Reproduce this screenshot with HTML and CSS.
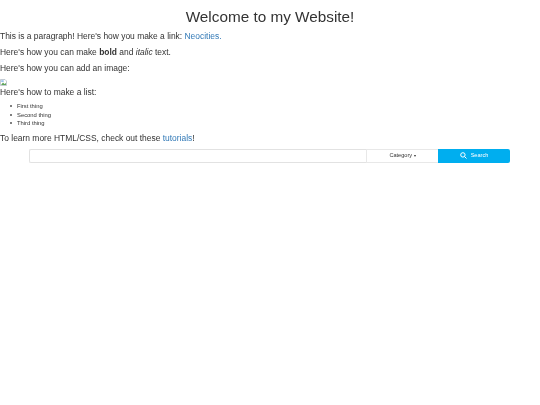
FILE: index.html
```html
<!DOCTYPE html>
<html lang="en">
<head>
    <meta charset="UTF-8">
    <title>My Website</title>
    <link rel="stylesheet" href="styles.css">
</head>
<body>
    <h1>Welcome to my Website!</h1>

    <p>This is a paragraph! Here's how you make a link: <a href="#">Neocities.</a></p>
    <p>Here's how you can make <strong>bold</strong> and <em>italic</em> text.</p>
    <p class="image-label">Here's how you can add an image:</p>

    <svg class="broken-image" width="7" height="7" viewBox="0 0 7 7">
        <path d="M0.5 0.5H5L6.5 2V6.5H0.5Z" fill="#fff" stroke="#a9b4c0" stroke-width="0.7"/>
        <path d="M1 6L3 3.5L4.5 5L6 4V6Z" fill="#5fa55a"/>
        <rect x="1.2" y="1.2" width="2.5" height="1.8" fill="#9cc3ea"/>
    </svg>

    <p class="list-label">Here's how to make a list:</p>
    <ul>
        <li>First thing</li>
        <li>Second thing</li>
        <li>Third thing</li>
    </ul>

    <p>To learn more HTML/CSS, check out these <a href="#">tutorials</a>!</p>

    <div class="search-bar">
        <input class="search-input" type="text">
        <div class="category">Category <span class="caret"></span></div>
        <div class="search-btn">
            <svg width="7" height="7" viewBox="0 0 14 14" fill="none" stroke="#fff" stroke-width="2">
                <circle cx="5.8" cy="5.8" r="4.4"/>
                <path d="M9 9L13 13"/>
            </svg>
            Search
        </div>
    </div>
</body>
</html>
```

FILE: styles.css
```css
* {
    box-sizing: border-box;
}

body {
    margin: 0;
    font-family: "Liberation Sans", Arial, sans-serif;
    font-size: 8.45px;
    line-height: 13px;
    color: #333;
    background-color: #fff;
    filter: blur(0.3px);
}

h1 {
    margin: 8px 0 4px;
    font-size: 15.3px;
    font-weight: 400;
    line-height: 18px;
    text-align: center;
}

p {
    margin: 0 0 3px;
}

a {
    color: #337ab7;
    text-decoration: none;
}

.image-label {
    margin-bottom: 4px;
}

.broken-image {
    display: block;
}

.list-label {
    margin-bottom: 3px;
}

ul {
    margin: 0 0 4px;
    padding-left: 10px;
    font-size: 5.85px;
    line-height: 8.5px;
    list-style: none;
}

li::before {
    content: "";
    display: inline-block;
    width: 2px;
    height: 2px;
    margin-right: 5px;
    vertical-align: 1px;
    border-radius: 50%;
    background-color: #555;
}

.search-bar {
    display: flex;
    height: 14px;
    margin: 4px 30px 0 29px;
    font-size: 5.6px;
}

.search-input {
    flex: 1;
    min-width: 0;
    padding: 0;
    border: 1px solid #e2e2e2;
    border-right: 0;
    border-radius: 2px 0 0 2px;
    outline: none;
}

.category {
    display: flex;
    align-items: center;
    justify-content: center;
    gap: 1.5px;
    width: 72px;
    border: 1px solid #e8e8e8;
    border-right: 0;
}

.caret {
    border-top: 2px solid #333;
    border-left: 1.5px solid transparent;
    border-right: 1.5px solid transparent;
}

.search-btn {
    display: flex;
    align-items: center;
    justify-content: center;
    gap: 4px;
    width: 72px;
    color: #fff;
    background-color: #00aeef;
    border-radius: 0 2px 2px 0;
}
```
